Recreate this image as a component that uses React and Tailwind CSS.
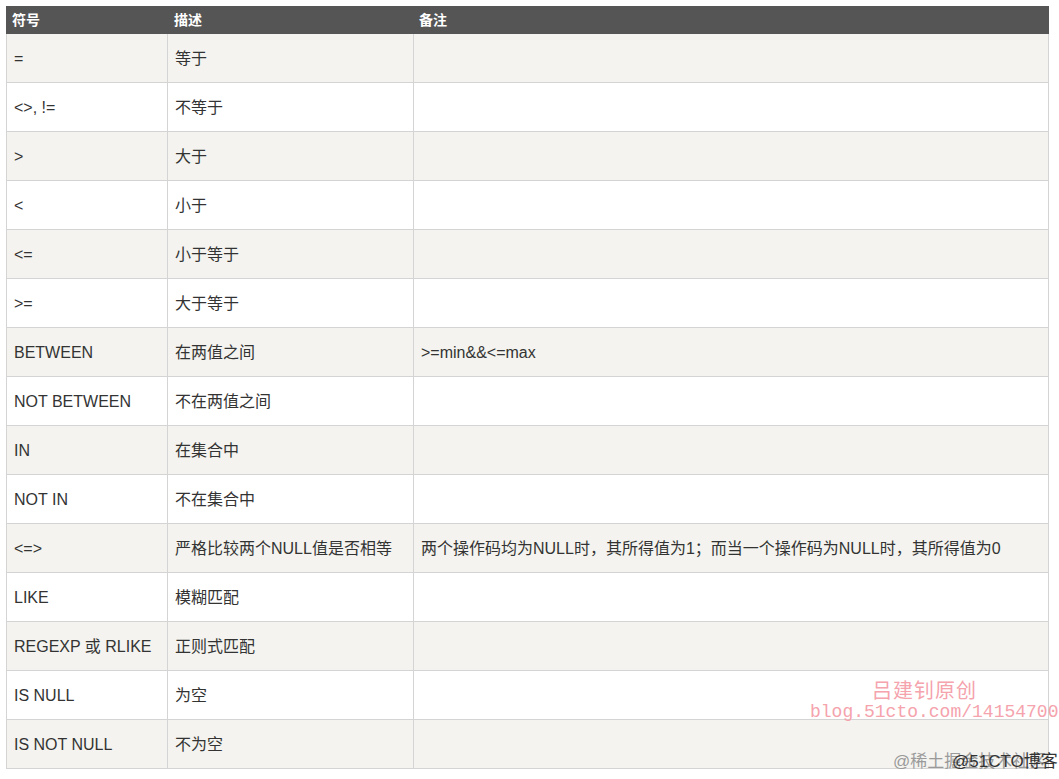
import React from "react";

const rows = [
    { sym: "=", desc: "等于", note: "" },
    { sym: "<>, !=", desc: "不等于", note: "" },
    { sym: ">", desc: "大于", note: "" },
    { sym: "<", desc: "小于", note: "" },
    { sym: "<=", desc: "小于等于", note: "" },
    { sym: ">=", desc: "大于等于", note: "" },
    { sym: "BETWEEN", desc: "在两值之间", note: ">=min&&<=max" },
    { sym: "NOT BETWEEN", desc: "不在两值之间", note: "" },
    { sym: "IN", desc: "在集合中", note: "" },
    { sym: "NOT IN", desc: "不在集合中", note: "" },
    { sym: "<=>", desc: "严格比较两个NULL值是否相等", note: "两个操作码均为NULL时，其所得值为1；而当一个操作码为NULL时，其所得值为0" },
    { sym: "LIKE", desc: "模糊匹配", note: "" },
    { sym: "REGEXP 或 RLIKE", desc: "正则式匹配", note: "" },
    { sym: "IS NULL", desc: "为空", note: "" },
    { sym: "IS NOT NULL", desc: "不为空", note: "" },
];

const font = "font-['Liberation_Sans','Noto_Sans_CJK_SC',sans-serif]";

const App = () => {
    return (
        <div className={`relative w-[1059px] h-[779px] bg-white overflow-hidden ${font}`}>
            <div className="ml-[6px] pt-[6px] w-[1043px]">
                <div className="grid grid-cols-[161px_246px_636px] h-[28px] bg-[#555555] text-white text-[14px] font-bold items-center">
                    <div className="pl-[6px]">符号</div>
                    <div className="pl-[7px]">描述</div>
                    <div className="pl-[6px]">备注</div>
                </div>
                <div className="border-l border-r border-[#d4d4d4]">
                    {rows.map((row, i) => (
                        <div
                            key={i}
                            className={`grid grid-cols-[161px_246px_634px] h-[49px] border-b border-[#d4d4d4] text-[16px] text-[#333333] ${i % 2 === 0 ? "bg-[#f4f3ef]" : "bg-white"}`}
                        >
                            <div className="flex items-center pl-[7px] pt-[2px] border-r border-[#d4d4d4]">{row.sym}</div>
                            <div className="flex items-center pl-[7px] pt-[2px] border-r border-[#d4d4d4] whitespace-nowrap">{row.desc}</div>
                            <div className="flex items-center pl-[7px] pt-[2px] whitespace-nowrap">{row.note}</div>
                        </div>
                    ))}
                </div>
            </div>

            {/* watermarks */}
            <div className="absolute left-[872px] top-[677px] text-[20px] leading-[26px] text-[#f5a3ad] font-['Noto_Sans_CJK_SC',serif] tracking-[1px]">
                吕建钊原创
            </div>
            <div className="absolute left-[810px] top-[701px] text-[18px] leading-[22px] text-[#f5a3ad] font-['Liberation_Mono',monospace]">
                blog.51cto.com/14154700
            </div>
            <div className="absolute left-[893px] top-[751px] text-[17px] leading-[22px] text-[#9a9a9a] font-['Liberation_Sans','Noto_Sans_CJK_SC',sans-serif]">
                @稀土掘金技术社区
            </div>
            <div className="absolute left-[952px] top-[751px] text-[17px] leading-[22px] text-[#333333] font-['Liberation_Sans','Noto_Sans_CJK_SC',sans-serif]">
                @51CTO博客
            </div>
        </div>
    );
};
export default App;
